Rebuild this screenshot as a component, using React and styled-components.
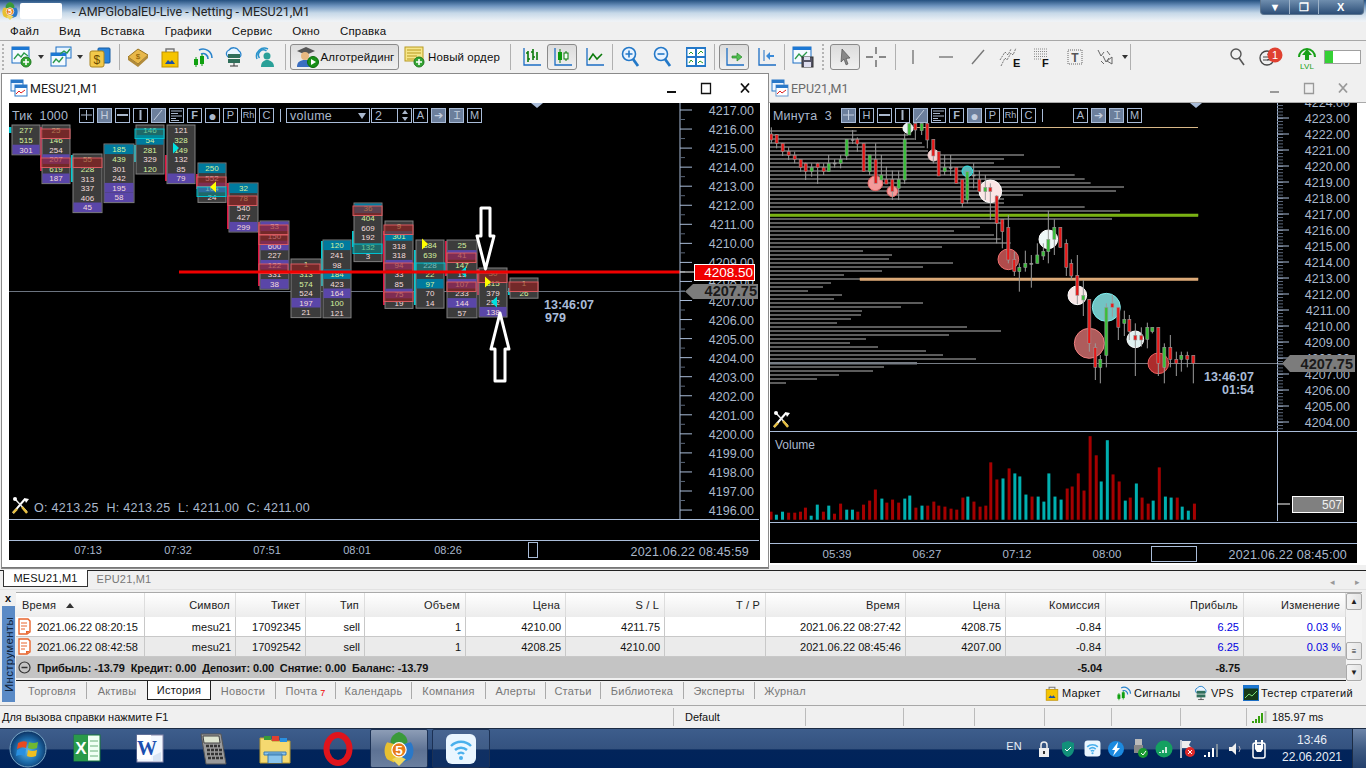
import React from "react";
import styled, { createGlobalStyle } from "styled-components";

const GlobalStyle = createGlobalStyle`
  html, body { margin: 0; padding: 0; background: #f0f0f0; }
  body { font-family: "Liberation Sans", Arial, sans-serif; }
  * { box-sizing: border-box; }
`;

const Screen = styled.div`
  width: 1366px;
  height: 768px;
  overflow: hidden;
  display: flex;
  flex-direction: column;
  background: #f0f0f0;
  color: #111;
`;

/* ---------- top of the window ---------- */
const TitleBar = styled.div`
  height: 22px;
  display: flex;
  align-items: center;
  padding-left: 1px;
  background: linear-gradient(180deg, #24507f 0, #6f95bf 6px, #c6d8e8 13px, #eef2f6 21px);
`;
const Redacted = styled.div`
  width: 42px;
  height: 16px;
  margin: 0 10px 0 1px;
  background: #fff;
  border-radius: 2px;
`;
const TitleText = styled.div`
  font-family: Roboto, sans-serif;
  font-size: 12.5px;
  color: #222;
`;
const CaptionButtons = styled.div`
  margin-left: auto;
  margin-right: 2px;
  margin-top: -7px;
  width: 104px;
  height: 15px;
  display: flex;
  border: 1px solid #5c7590;
  border-top: 0;
  border-radius: 0 0 4px 4px;
  background: linear-gradient(180deg, #6f8eae, #2d4f78);
`;
const CaptionButton = styled.div`
  flex: ${(p) => p.$grow || 1};
  display: flex;
  align-items: center;
  justify-content: center;
  color: #fff;
  font-size: 11px;
  font-weight: bold;
  border-right: 1px solid #9db2c8;
  &:last-child { border-right: 0; }
`;
const MenuBar = styled.div`
  height: 19px;
  display: flex;
  align-items: center;
  gap: 20px;
  padding-left: 10px;
  font-size: 11.5px;
  letter-spacing: 0.2px;
  background: #f0f0f0;
  border-bottom: 1px solid #a8a8a8;
`;
const Toolbar = styled.div`
  height: 32px;
  display: flex;
  align-items: center;
  background: #f0f0f0;
`;
const Grip = styled.div`
  width: ${(p) => p.$w || 4}px;
  height: 26px;
  border-left: 2px dotted #b4b4b4;
  margin-left: ${(p) => p.$ml || 0}px;
`;
const Gap = styled.div`
  width: ${(p) => p.$w}px;
  flex-shrink: 0;
`;
const Fill = styled.div`
  flex: 1;
`;
const Sep = styled.div`
  width: 1px;
  height: 26px;
  flex-shrink: 0;
  background: #b0b0b0;
`;
const ToolBtn = styled.div`
  width: ${(p) => p.$w}px;
  height: 26px;
  flex-shrink: 0;
  display: flex;
  align-items: center;
  justify-content: center;
  gap: 2px;
  font-size: 11.5px;
  letter-spacing: 0.1px;
  white-space: nowrap;
  border-radius: 3px;
  border: 1px solid ${(p) => (p.$pressed ? "#8a8a8a" : "transparent")};
  background: ${(p) => (p.$pressed ? "linear-gradient(180deg,#dcdcdc,#f0f0f0)" : "transparent")};
`;
const DropArrow = styled.div`
  width: ${(p) => p.$w}px;
  flex-shrink: 0;
  display: flex;
  justify-content: center;
  &::after {
    content: "";
    border: 3.5px solid transparent;
    border-top: 4px solid #333;
    border-bottom: 0;
  }
`;
const LevelBar = styled.div`
  width: 37px;
  height: 14px;
  flex-shrink: 0;
  border: 1px solid #a0a0a0;
  background: linear-gradient(90deg, #35d035 0 24%, #fff 24%);
`;

/* ---------- chart windows ---------- */
const Workspace = styled.div`
  height: 497px;
  display: flex;
  padding-top: 1px;
  align-items: flex-start;
`;
const ChartWindow = styled.div`
  display: flex;
  flex-direction: column;
  background: #fff;
  width: ${(p) => p.$w}px;
  margin-left: ${(p) => p.$ml}px;
  height: ${(p) => p.$h}px;
  padding-right: ${(p) => p.$pr}px;
  padding-left: ${(p) => p.$pl}px;
  border-bottom: ${(p) => (p.$active ? "1px solid #777" : "0")};
  outline: ${(p) => (p.$active ? "1px solid #8a8a8a" : "0")};
`;
const WindowHead = styled.div`
  height: 29px;
  flex-shrink: 0;
  display: flex;
  align-items: center;
  gap: 2px;
  margin-right: ${(p) => -p.$pr}px;
  margin-left: ${(p) => -p.$pl}px;
  padding-left: ${(p) => p.$textPad}px;
  font-size: 12.5px;
  font-family: Roboto, sans-serif;
  color: ${(p) => (p.$active ? "#1a1a1a" : "#6a6a6a")};
  background: ${(p) => (p.$active ? "#fff" : "#f0f0f0")};
  border-bottom: 1px solid ${(p) => (p.$active ? "#fff" : "#aaa")};
`;
const HeadButtons = styled.div`
  margin-left: auto;
  padding-right: 6px;
  display: flex;
  align-items: center;
  color: ${(p) => (p.$active ? "#111" : "#999")};
  & > div:last-child { margin-left: ${(p) => (p.$active ? "5px" : "0")}; }
`;
const HeadButton = styled.div`
  width: 34px;
  display: flex;
  justify-content: center;
`;
const ChartFrame = styled.div`
  position: relative;
  background: #000;
  width: ${(p) => p.$w}px;
  height: ${(p) => p.$h}px;
  overflow: hidden;
  & > svg { display: block; }
`;
const ChartTools = styled.div`
  position: absolute;
  top: 5px;
  left: 3px;
  display: flex;
  align-items: center;
  gap: 3px;
  height: 15px;
  color: #aab8cc;
  font-size: 12.5px;
`;
const ChartLabel = styled.div`
  width: ${(p) => p.$w}px;
  white-space: pre;
  letter-spacing: 0.2px;
  flex-shrink: 0;
`;
const ChartBtn = styled.div`
  width: 15px;
  height: 15px;
  flex-shrink: 0;
  display: flex;
  align-items: center;
  justify-content: center;
  border: 1px solid #a9bcd8;
  font-size: ${(p) => p.$size || 11}px;
  line-height: 1;
  color: ${(p) => (p.$on ? "#c4cfdf" : "#aab8cc")};
  background: ${(p) => (p.$on ? "#6c7f9c" : "#000")};
`;
const ChartDivider = styled.div`
  width: ${(p) => p.$w}px;
  height: 13px;
  flex-shrink: 0;
  border-left: 1px solid #a9bcd8;
  margin-left: 3px;
`;
const VolumeSelect = styled.div`
  width: 84px;
  height: 15px;
  flex-shrink: 0;
  margin-left: -1px;
  display: flex;
  align-items: center;
  justify-content: space-between;
  padding: 0 3px;
  border: 1px solid #a9bcd8;
  font-size: 12.5px;
  letter-spacing: 0.3px;
  &::after {
    content: "";
    border: 4px solid transparent;
    border-top: 6px solid #aab8cc;
    border-bottom: 0;
  }
`;
const Spinner = styled.div`
  width: 41px;
  height: 15px;
  flex-shrink: 0;
  margin-left: -2px;
  margin-right: -2px;
  display: flex;
  align-items: center;
  justify-content: space-between;
  padding-left: 3px;
  border: 1px solid #a9bcd8;
`;
const SpinArrows = styled.div`
  width: 14px;
  height: 13px;
  display: flex;
  flex-direction: column;
  align-items: center;
  justify-content: space-around;
  border-left: 1px solid #a9bcd8;
  &::before, &::after {
    content: "";
    border: 3px solid transparent;
  }
  &::before { border-bottom: 4px solid #aab8cc; border-top: 0; }
  &::after { border-top: 4px solid #aab8cc; border-bottom: 0; }
`;

/* ---------- symbol tabs ---------- */
const SymbolTabs = styled.div`
  height: 20px;
  flex-shrink: 0;
  display: flex;
  align-items: flex-end;
  padding: 0 0 2px 3px;
  font-size: 11px;
  letter-spacing: 0.2px;
  border-top: 1px solid #222;
  background: #f0f0f0;
  border-bottom: 1px solid #e2e2e2;
`;
const SymbolTab = styled.div`
  width: ${(p) => p.$w}px;
  height: 17px;
  display: flex;
  align-items: center;
  justify-content: center;
  color: ${(p) => (p.$active ? "#111" : "#777")};
  background: ${(p) => (p.$active ? "#fff" : "transparent")};
  border: ${(p) => (p.$active ? "1px solid #333" : "0")};
  border-top: 0;
`;
const TabArrows = styled.div`
  margin-left: auto;
  width: 36px;
  display: flex;
  justify-content: space-between;
  padding-right: 6px;
  color: #999;
  font-size: 9px;
`;

/* ---------- terminal ---------- */
const Terminal = styled.div`
  height: 116px;
  flex-shrink: 0;
  display: flex;
  padding-top: 2px;
  border-bottom: 1px solid #a8a8a8;
`;
const SideStrip = styled.div`
  width: 16px;
  flex-shrink: 0;
  display: flex;
  flex-direction: column;
  align-items: center;
  font-size: 11px;
`;
const CloseMark = styled.div`
  height: 14px;
  font-weight: bold;
  font-size: 11px;
  line-height: 12px;
`;
const SideLabel = styled.div`
  width: 13px;
  height: 96px;
  display: flex;
  align-items: center;
  justify-content: center;
  background: #5a8ac6;
  color: #10243c;
  writing-mode: vertical-rl;
  transform: rotate(180deg);
  letter-spacing: 0.3px;
  font-size: 11.5px;
`;
const TerminalBody = styled.div`
  width: 1330px;
  flex-shrink: 0;
  display: flex;
  flex-direction: column;
`;
const TableGrid = styled.div`
  display: grid;
  grid-template-columns: 129px 91px 70px 59px 101px 100px 99px 101px 140px 100px 100px 138px 102px;
  height: 85px;
  grid-template-rows: 24px 20px 20px 21px;
  border-top: 1px solid #aaa;
  border-bottom: 0;
  background: #fff;
  font-size: 11px;
`;
const HeadCell = styled.div`
  display: flex;
  align-items: center;
  justify-content: ${(p) => (p.$left ? "flex-start" : "flex-end")};
  gap: 10px;
  padding: 0 5px 0 6px;
  color: #222;
  letter-spacing: 0.2px;
  background: linear-gradient(180deg, #fff, #ececec);
  border-right: 1px solid #ddd;
`;
const SortMark = styled.span`
  border: 4px solid transparent;
  border-bottom: 5px solid #333;
  border-top: 0;
`;
const Cell = styled.div`
  display: flex;
  align-items: center;
  justify-content: ${(p) => (p.$left ? "flex-start" : "flex-end")};
  gap: 6px;
  padding: 0 4px 0 2px;
  color: ${(p) => (p.$blue ? "#0000e0" : "#111")};
  background: ${(p) => (p.$alt ? "#ebebeb" : "#fff")};
  border-right: 1px solid #c8c8c8;
  border-bottom: 1px solid #c8c8c8;
`;
const SumCell = styled.div`
  grid-column: span ${(p) => p.$span || 1};
  display: flex;
  align-items: center;
  justify-content: ${(p) => (p.$left ? "flex-start" : "flex-end")};
  gap: 6px;
  white-space: pre;
  padding: 0 4px 0 2px;
  font-weight: bold;
  letter-spacing: -0.1px;
  background: #c4c4c4;
`;
const BottomTabs = styled.div`
  margin-top: 3px;
  margin-right: -16px;
  height: 22px;
  display: flex;
  padding-left: 2px;
  border-top: 1px solid #222;
  font-size: 11px;
  letter-spacing: 0.25px;
`;
const BottomTab = styled.div`
  width: ${(p) => p.$w}px;
  flex-shrink: 0;
  height: ${(p) => (p.$active ? "19px" : "17px")};
  margin-top: ${(p) => (p.$active ? "0" : "1px")};
  display: flex;
  align-items: center;
  justify-content: center;
  color: ${(p) => (p.$active ? "#111" : "#777")};
  background: ${(p) => (p.$active ? "#fff" : "transparent")};
  border: ${(p) => (p.$active ? "1px solid #222" : "0")};
  border-top: 0;
  border-right: ${(p) => (p.$active ? "1px solid #222" : p.$noSep ? "0" : "1px solid #aaa")};
`;
const MailCount = styled.span`
  color: #e00;
  font-size: 9px;
  margin: 4px 0 0 3px;
`;
const ServiceLink = styled.div`
  width: ${(p) => p.$w}px;
  flex-shrink: 0;
  display: flex;
  align-items: center;
  gap: 2px;
  color: #111;
  height: 20px;
  margin-top: 2px;
`;
const ScrollBar = styled.div`
  width: 16px;
  height: 90px;
  flex-shrink: 0;
  display: flex;
  flex-direction: column;
  background: #f4f4f4;
  border-top: 1px solid #aaa;
`;
const ScrollBtn = styled.div`
  height: ${(p) => p.$h}px;
  margin-top: ${(p) => p.$mt || 0}px;
  display: flex;
  align-items: center;
  justify-content: center;
  background: linear-gradient(90deg, #f4f4f4, #e4e4e4);
  border: 1px solid #aaa;
  border-radius: 2px;
  font-size: 8px;
  color: #222;
`;

/* ---------- status + taskbar ---------- */
const StatusBar = styled.div`
  height: 22px;
  flex-shrink: 0;
  display: flex;
  align-items: center;
  font-size: 11px;
  background: #f0f0f0;
`;
const StatusCell = styled.div`
  width: ${(p) => p.$w}px;
  height: 18px;
  flex-shrink: 0;
  display: flex;
  align-items: center;
  gap: 4px;
  padding-left: ${(p) => p.$pl || 0}px;
  border-right: ${(p) => (p.$last ? "0" : "1px solid #bbb")};
`;
const Taskbar = styled.div`
  height: 40px;
  flex-shrink: 0;
  display: flex;
  align-items: center;
  border-top: 1px solid #1c2c44;
  color: #e8eef6;
  background: linear-gradient(180deg, #3d5d8c 0, #34527f 52%, #02245a 53%, #00235a 100%);
`;
const TaskItem = styled.div`
  width: ${(p) => p.$w}px;
  height: 39px;
  flex-shrink: 0;
  display: flex;
  align-items: center;
  justify-content: center;
  border: ${(p) => (p.$frame ? "1px solid #1c3154" : "0")};
  border-radius: 2px;
  background: ${(p) =>
    p.$active
      ? "linear-gradient(180deg,#8d9db6,#5d7294 55%,#6a7f9f)"
      : p.$frame
      ? "rgba(255,255,255,.06)"
      : "transparent"};
`;
const TrayLang = styled.div`
  width: 36px;
  text-align: center;
  font-size: 11px;
  margin-top: -6px;
`;
const TrayIcon = styled.div`
  width: 24px;
  display: flex;
  justify-content: center;
`;
const Clock = styled.div`
  width: 80px;
  text-align: center;
  font-size: 12px;
  line-height: 17px;
`;
const ShowDesktop = styled.div`
  width: 14px;
  height: 39px;
  background: linear-gradient(180deg, #6c84a8, #3c5880 55%, #24406c);
  border-left: 1px solid #1c2c44;
`;

/* ---------- icons ---------- */
const Ico = ({ s = 20, w, h, children }) => (
  <svg width={w || s} height={h || s} viewBox={`0 0 ${w || s} ${h || s}`}>
    {children}
  </svg>
);
const Plus = ({ x, y, r = 5 }) => (
  <g>
    <circle cx={x} cy={y} r={r} fill="#35a535" stroke="#1f7a1f" />
    <path d={`M${x - r + 2} ${y}h${2 * r - 4}M${x} ${y - r + 2}v${2 * r - 4}`} stroke="#fff" strokeWidth="1.6" />
  </g>
);
const NewChartIcon = () => (
  <Ico s={22}>
    <rect x="1" y="1" width="17" height="16" fill="#f4faff" stroke="#1c6ec4" />
    <rect x="1" y="1" width="17" height="3" fill="#1c78d4" />
    <path d="M3 13l4-5 3 3 3-4 4 3" fill="none" stroke="#2a9a4a" strokeWidth="1.3" />
    <Plus x={15} y={16} />
  </Ico>
);
const ProfilesIcon = () => (
  <Ico s={22}>
    <rect x="6" y="1" width="15" height="11" fill="#e8f5ff" stroke="#1c6ec4" />
    <rect x="1" y="7" width="15" height="13" fill="#f4faff" stroke="#1c6ec4" />
    <rect x="1" y="7" width="15" height="3" fill="#1c78d4" />
    <path d="M3 17l3-4 3 3 4-5M10 8l4-3 3 2 3-4" fill="none" stroke="#2a9a4a" strokeWidth="1.4" />
  </Ico>
);
const MoneyIcon = () => (
  <Ico s={22}>
    <rect x="9" y="2" width="12" height="15" rx="1" fill="#2a84dc" stroke="#145aa0" />
    <rect x="1" y="5" width="14" height="16" rx="2" fill="#f2c94a" stroke="#a88420" />
    <text x="8" y="18" fontSize="12" textAnchor="middle" fill="#6b4a00" fontFamily="Liberation Sans">$</text>
  </Ico>
);
const BookIcon = () => (
  <Ico s={22}>
    <path d="M1 11L11 3l10 6-10 9z" fill="#e8b84a" stroke="#9a7420" />
    <path d="M1 11l10 7 10-9v3l-10 9-10-7z" fill="#b08a3a" />
    <text x="11" y="13" fontSize="8" textAnchor="middle" fill="#8a5a00" fontFamily="Liberation Sans">$</text>
  </Ico>
);
const BagIcon = ({ s = 22 }) => (
  <svg width={s} height={s} viewBox="0 0 22 22">
    <rect x="3" y="6" width="16" height="15" fill="#f5c400" stroke="#c09000" />
    <path d="M7 6V3h8v3" fill="none" stroke="#777" strokeWidth="1.4" />
    <path d="M6 18l3-4 2 2 2-2 3 4z" fill="#1a50a8" />
  </svg>
);
const SignalIcon = ({ s = 22 }) => (
  <svg width={s} height={s} viewBox="0 0 22 22">
    <path d="M7 4a9 9 0 0 1 13 8M9 8a5 5 0 0 1 7 5" fill="none" stroke="#2a84cc" strokeWidth="1.6" />
    <rect x="2" y="13" width="4" height="6" fill="#10a010" />
    <rect x="8" y="10" width="4" height="8" fill="#10a010" />
    <path d="M4 11v10M10 8v12" stroke="#10a010" />
  </svg>
);
const VpsIcon = ({ s = 22 }) => (
  <svg width={s} height={s} viewBox="0 0 22 22">
    <path d="M5 11a4 4 0 0 1 1-7 6 6 0 0 1 10 1 4 4 0 0 1 1 6" fill="#eaf5ff" stroke="#2a84cc" strokeWidth="1.3" />
    <rect x="5" y="8" width="12" height="4" fill="#2f6e5a" />
    <rect x="5" y="13" width="12" height="4" fill="#2f6e5a" />
    <path d="M11 17v3M7 20h8" stroke="#333" />
  </svg>
);
const PersonIcon = () => (
  <Ico s={22}>
    <path d="M3 13a8 8 0 0 1 11-10M5.5 12a5 5 0 0 1 7-7" fill="none" stroke="#2a94cc" strokeWidth="1.5" />
    <circle cx="13" cy="10" r="3.5" fill="#2aa098" />
    <path d="M7 21c0-5 3-7 6-7s7 2 7 7z" fill="#2aa098" />
  </Ico>
);
const AlgoIcon = () => (
  <Ico s={24}>
    <path d="M2 6l9-4 9 4-9 4z" fill="#555" />
    <circle cx="10" cy="11" r="4" fill="#e8b880" />
    <path d="M2 22c0-5 3-7 8-7s7 2 7 7z" fill="#3a6ec0" />
    <circle cx="18" cy="17" r="5.5" fill="#189018" stroke="#0c6a0c" />
    <path d="M16 14l5 3-5 3z" fill="#fff" />
  </Ico>
);
const OrderIcon = () => (
  <Ico s={22}>
    <rect x="1" y="1" width="18" height="14" fill="#f6e68a" stroke="#b89a20" />
    <path d="M3 4h14M3 7h14M3 10h10M3 13h8" stroke="#b89a20" />
    <Plus x={15} y={16} />
  </Ico>
);
const Axes = () => <path d="M3 1v17h17" fill="none" stroke="#1c6ec4" strokeWidth="1.3" />;
const BarsIcon = () => (
  <Ico>
    <Axes />
    <path d="M7 4v11M5 6h2M7 12h2M12 2v11M10 5h2M12 10h2M16 5v8" stroke="#0a7a0a" strokeWidth="1.6" fill="none" />
  </Ico>
);
const CandlesIcon = () => (
  <Ico>
    <Axes />
    <path d="M8 2v14M14 4v10" stroke="#0a7a0a" />
    <rect x="6" y="5" width="4" height="8" fill="#0a9a0a" />
    <rect x="12" y="6" width="4" height="6" fill="#f4fff4" stroke="#0a7a0a" />
  </Ico>
);
const LineIcon = () => (
  <Ico>
    <Axes />
    <path d="M5 13l4-6 4 5 5-5" fill="none" stroke="#0a7a0a" strokeWidth="1.6" />
  </Ico>
);
const ZoomIcon = ({ plus }) => (
  <Ico s={22}>
    <circle cx="9" cy="8" r="6.5" fill="#e8f3ff" stroke="#2378c8" strokeWidth="1.6" />
    <path d="M13 13l5 7" stroke="#2378c8" strokeWidth="2.8" />
    <path d={plus ? "M5.5 8h7M9 4.5v7" : "M5.5 8h7"} stroke="#2378c8" strokeWidth="1.6" />
  </Ico>
);
const TileIcon = () => (
  <Ico s={22}>
    <rect x="1" y="1" width="20" height="20" fill="#2378c8" />
    <rect x="2.5" y="3" width="7.5" height="7" fill="#fff" />
    <rect x="12" y="3" width="7.5" height="7" fill="#fff" />
    <rect x="2.5" y="12" width="7.5" height="7" fill="#fff" />
    <rect x="12" y="12" width="7.5" height="7" fill="#fff" />
    <path d="M4 8l2-2 2 2M13 8l3-3 2 2M4 17l2-3 2 2M13 17l2-2 3 2" stroke="#2a9a2a" fill="none" />
  </Ico>
);
const AutoScrollIcon = () => (
  <Ico>
    <Axes />
    <path d="M8 9h5V6l5 4-5 4v-3H8z" fill="#52c052" stroke="#2a8a2a" strokeWidth=".7" />
  </Ico>
);
const ShiftIcon = () => (
  <Ico>
    <Axes />
    <path d="M8 3v11" stroke="#1c6ec4" />
    <path d="M18 8h-4V5l-4 4 4 4v-3h4z" fill="#3a8ad8" />
  </Ico>
);
const SaveIcon = () => (
  <Ico s={22}>
    <rect x="1" y="1" width="18" height="16" fill="#f4faff" stroke="#1c6ec4" />
    <rect x="1" y="1" width="18" height="3" fill="#1c78d4" />
    <path d="M3 13l4-5 3 3 5-5" stroke="#2a9a4a" fill="none" strokeWidth="1.3" />
    <rect x="10" y="11" width="11" height="10" fill="#556" stroke="#333" />
    <rect x="12" y="16" width="7" height="5" fill="#dde" />
    <rect x="12" y="11" width="6" height="3" fill="#dde" />
  </Ico>
);
const CursorIcon = () => (
  <Ico s={18}>
    <path d="M6 1l8 9-4 .5L12 16l-2 .8-2-5.6L5 14z" fill="#888" stroke="#444" strokeWidth=".6" />
  </Ico>
);
const CrossIcon = () => (
  <Ico s={22}>
    <path d="M11 1v7M11 14v7M1 11h7M14 11h7" stroke="#666" strokeWidth="1.4" />
  </Ico>
);
const ToolLine = ({ d }) => (
  <Ico s={20}>
    <path d={d} stroke="#777" strokeWidth="1.4" fill="none" />
  </Ico>
);
const EIcon = () => (
  <Ico s={24}>
    <path d="M3 21l4-8 2 2 4-7 2 2 3-7M2 15l5-8 3 3 3-6" stroke="#777" fill="none" strokeDasharray="2 1" />
    <text x="15" y="22" fontSize="11" fontWeight="bold" fill="#111" fontFamily="Liberation Sans">E</text>
  </Ico>
);
const FIcon = () => (
  <Ico s={22}>
    <path d="M2 3h13M2 5.5h13M2 8h13M2 10.500h13M2 13h7" stroke="#888" strokeDasharray="1 1" />
    <text x="10" y="21" fontSize="11" fontWeight="bold" fill="#111" fontFamily="Liberation Sans">F</text>
  </Ico>
);
const TIcon = () => (
  <Ico s={20}>
    <rect x="3" y="3" width="14" height="14" fill="none" stroke="#666" strokeDasharray="1 1" />
    <text x="10" y="15" fontSize="12" fontWeight="bold" textAnchor="middle" fill="#555" fontFamily="Liberation Sans">T</text>
  </Ico>
);
const ArrowsIcon = () => (
  <Ico s={20}>
    <path d="M3 3l3 6 3-4M8 9l3 6 3-4M12 4l3 4M6 14l3 3" stroke="#666" fill="none" />
    <path d="M12 14l5-4v7z" fill="none" stroke="#666" />
  </Ico>
);
const SearchIcon = () => (
  <Ico s={20}>
    <circle cx="8" cy="7" r="5" fill="none" stroke="#555" strokeWidth="1.4" />
    <path d="M11 11l5 7" stroke="#555" strokeWidth="1.6" />
  </Ico>
);
const NotifyIcon = () => (
  <Ico w={28} h={22}>
    <circle cx="9" cy="12" r="7" fill="none" stroke="#444" strokeWidth="1.3" />
    <path d="M5 11h7M5 14h7M9 8a2 2 0 0 1 0 6" stroke="#444" fill="none" />
    <circle cx="17" cy="9" r="7.500" fill="#e04030" />
    <text x="17" y="13" fontSize="11" textAnchor="middle" fill="#fff" fontFamily="Liberation Sans">1</text>
  </Ico>
);
const LvlIcon = () => (
  <Ico w={24} h={26}>
    <path d="M4 13a8 8 0 1 1 16 0" fill="none" stroke="#18a018" strokeWidth="2" />
    <path d="M12 5l5 6h-3v5h-4v-5H7z" fill="#18a018" />
    <text x="12" y="25" fontSize="8" textAnchor="middle" fill="#18a018" fontFamily="Liberation Sans">LVL</text>
  </Ico>
);
const WindowIcon = ({ dim }) => (
  <Ico s={18}>
    <rect x="1" y="1" width="12" height="11" fill="#eef6ff" stroke="#2a78c8" />
    <rect x="1" y="1" width="12" height="3" fill="#2a78c8" />
    <rect x="5" y="6" width="12" height="11" fill="#fff" stroke={dim ? "#6a9ad0" : "#2a78c8"} />
    <rect x="5" y="6" width="12" height="3" fill="#2a78c8" />
    <path d="M6 15l3-3 2 2 4-3" stroke="#e02020" fill="none" />
  </Ico>
);
const Mt5Logo = ({ s = 18 }) => (
  <svg width={s} height={s} viewBox="0 0 20 20">
    <path d="M10 0c3 1 5 3 5 6l-5 4-5-4c0-3 2-5 5-6z" fill="#3a9a3a" />
    <path d="M3 6c-2 3-2 7 0 10l4 2 3-5-3-6z" fill="#e8c030" />
    <path d="M17 6c2 3 2 7 0 10l-5 2-2-5 3-6z" fill="#2a78c8" />
    <path d="M6 16l4 4 4-4-4-2z" fill="#f0d860" />
    <circle cx="10" cy="10.500" r="4.200" fill="#e87a18" stroke="#fff" strokeWidth=".7" />
    <text x="10" y="13.500" fontSize="8" fontWeight="bold" textAnchor="middle" fill="#fff" fontFamily="Liberation Sans">5</text>
  </svg>
);
const OrbIcon = () => (
  <svg width="38" height="38" viewBox="0 0 38 38">
    <defs>
      <radialGradient id="orb" cx="50%" cy="55%" r="55%">
        <stop offset="0" stopColor="#60b8e8" />
        <stop offset="0.6" stopColor="#1c6aa8" />
        <stop offset="1" stopColor="#0c3060" />
      </radialGradient>
    </defs>
    <circle cx="19" cy="19" r="18" fill="url(#orb)" stroke="#7aa8c8" />
    <path d="M9 13q5-3 9-1l-1 6q-4-2-9 1z" fill="#e84a20" />
    <path d="M20 12q4 2 9 0l-1 6q-5 2-9 0z" fill="#70b830" />
    <path d="M8 20q5-3 9-1l-1 7q-4-2-9 0z" fill="#2a90e0" />
    <path d="M19 20q4 2 9 0l-1 6q-5 2-9 0z" fill="#f0c020" />
  </svg>
);
const ExcelIcon = () => (
  <Ico w={30} h={30}>
    <rect x="2" y="1" width="26" height="26" fill="#f0fff4" stroke="#1a7a3a" />
    <rect x="2" y="1" width="14" height="26" fill="#2a9a4a" />
    <text x="9" y="20" fontSize="17" fontWeight="bold" textAnchor="middle" fill="#fff" fontFamily="Liberation Sans">X</text>
    <path d="M18 7h8M18 12h8M18 17h8M18 22h8" stroke="#6ab07a" />
  </Ico>
);
const WordIcon = () => (
  <Ico w={30} h={30}>
    <rect x="2" y="1" width="26" height="27" fill="#f4f8ff" stroke="#88a" />
    <rect x="2" y="1" width="14" height="24" fill="#fff" />
    <text x="12" y="21" fontSize="20" fontWeight="bold" textAnchor="middle" fill="#1c50b0" fontFamily="Liberation Serif">W</text>
    <path d="M18 22l8-4v9h-8z" fill="#d8e4f4" />
  </Ico>
);
const CalcIcon = () => (
  <Ico w={30} h={32}>
    <path d="M3 1h20l5 30H8z" fill="#9a9a9a" stroke="#555" />
    <path d="M5 3h16l1 7H6z" fill="#dde4d0" stroke="#444" />
    <path d="M8 13h14M9 17h15M9 21h15M10 25h15" stroke="#333" strokeWidth="2.500" strokeDasharray="3 1" />
  </Ico>
);
const FolderIcon = () => (
  <Ico w={32} h={30}>
    <path d="M1 4h10l2 3h18v22H1z" fill="#f5d970" stroke="#b89a30" />
    <rect x="5" y="2" width="7" height="4" fill="#3a9a3a" />
    <rect x="13" y="2" width="7" height="5" fill="#e04030" />
    <rect x="21" y="4" width="7" height="4" fill="#2a90e0" />
    <path d="M9 29V20h14v9M5 18h22v3H5z" fill="#8ac4ec" stroke="#3a7ab0" />
  </Ico>
);
const OperaIcon = () => (
  <Ico w={30} h={34}>
    <ellipse cx="15" cy="17" rx="11.500" ry="14" fill="none" stroke="#e0141c" strokeWidth="6" />
  </Ico>
);
const WifiTile = ({ s = 32, small }) => (
  <svg width={s} height={s} viewBox="0 0 32 32">
    <rect x="1" y="1" width="30" height="30" rx="6" fill="#eaf6ff" />
    <path d="M6 13a14 14 0 0 1 20 0M10 17a9 9 0 0 1 12 0M13 21a4 4 0 0 1 6 0" fill="none" stroke="#4ab0ec" strokeWidth={small ? 3 : 2.4} />
    <circle cx="16" cy="25" r="2" fill="#4ab0ec" />
  </svg>
);
const Tray = {
  lock: (
    <Ico w={14} h={18}>
      <path d="M4 8V5a3 3 0 0 1 6 0v3" fill="none" stroke="#eee" strokeWidth="1.500" />
      <rect x="2" y="8" width="10" height="9" fill="#eee" />
      <rect x="6" y="11" width="2" height="3" fill="#333" />
    </Ico>
  ),
  shield: (
    <Ico w={14} h={18}>
      <path d="M7 1l6 2v6c0 4-3 7-6 8-3-1-6-4-6-8V3z" fill="#12907a" />
      <path d="M4 9l2 2 4-4" stroke="#fff" fill="none" />
    </Ico>
  ),
  wifi: <WifiTile s={17} small />,
  bolt: (
    <Ico s={18}>
      <circle cx="9" cy="9" r="8" fill="#1c8ae0" />
      <path d="M11 2L5 10h3l-2 6 7-8h-3z" fill="#fff" />
    </Ico>
  ),
  usb: (
    <Ico s={20}>
      <rect x="5" y="0" width="7" height="6" fill="#bbb" />
      <rect x="4" y="6" width="9" height="8" fill="#888" />
      <circle cx="13" cy="14" r="5" fill="#189a30" />
      <path d="M11 14l2 2 3-4" stroke="#fff" fill="none" />
    </Ico>
  ),
  bars: (
    <Ico s={18}>
      <circle cx="9" cy="9" r="8.500" fill="#14a060" />
      <path d="M5 12v1M8 10v3M11 7v6" stroke="#fff" strokeWidth="1.600" />
    </Ico>
  ),
  flag: (
    <Ico s={20}>
      <path d="M3 1v18" stroke="#eee" strokeWidth="1.500" />
      <path d="M4 2h9l-2 4 3 3H4z" fill="#eee" />
      <circle cx="12" cy="13" r="5" fill="#e02a2a" />
      <path d="M10 11l4 4M14 11l-4 4" stroke="#fff" />
    </Ico>
  ),
  signal: (
    <Ico s={18}>
      <path d="M2 15v2M6 12v5M10 8v9" stroke="#fff" strokeWidth="2" />
      <path d="M14 4v13" stroke="#7a8a9a" strokeWidth="2" />
    </Ico>
  ),
  speaker: (
    <Ico s={18}>
      <path d="M2 7h3l4-4v12l-4-4H2z" fill="#eee" />
      <path d="M12 6a5 5 0 0 1 0 6" stroke="#aab" fill="none" />
    </Ico>
  ),
  plug: (
    <Ico s={20}>
      <rect x="3" y="4" width="12" height="15" rx="2" fill="none" stroke="#fff" strokeWidth="1.500" />
      <path d="M6 1v5M12 1v5" stroke="#fff" strokeWidth="2" />
      <path d="M5 6h8v4l-2 3H7l-2-3z" fill="#fff" />
    </Ico>
  ),
};
const ToolsMark = ({ x, y }) => (
  <g transform={`translate(${x} ${y})`}>
    <path d="M1 16L13 2" stroke="#fff" strokeWidth="2" />
    <path d="M12 1l5 1-3 4z" fill="#fff" />
    <path d="M3 2l12 13" stroke="#eee" strokeWidth="1.500" />
    <path d="M10 10l5 6" stroke="#e8c040" strokeWidth="2.400" />
    <path d="M1 16l4-4" stroke="#e8c040" strokeWidth="2.400" />
    <circle cx="3" cy="2" r="2" fill="#fff" />
  </g>
);
const TableDoc = () => (
  <Ico w={13} h={17}>
    <path d="M1 1h9l2 2v11l-3 2H1z" fill="#fff" stroke="#e8642c" strokeWidth="1.400" />
    <path d="M3 5h6M3 8h6M3 11h4" stroke="#e8642c" />
    <path d="M8 16l4-3h-4z" fill="#e8642c" />
  </Ico>
);

/* ---------- data ---------- */
const AXIS = "#a9bcd8";
const TXT = "#aab8cc";
const range = (n) => Array.from({ length: n }, (_, i) => i);

// rows: value + g(reen)/p(ink) text + u(purple)/b(lue) row
const footprint = [
  { x: 13, top: 125, rows: "277g 515g 301pu" },
  { x: 43, top: 125, rows: "25g 146g 254p 207pu 619g 187pu" },
  { x: 74, top: 154, w: 29, rows: "55g 228g 313p 337p 406p 45pu" },
  { x: 105, top: 144, w: 30, rows: "185gb 439g 301p 242p 195pu 58pu" },
  { x: 137, top: 125, rows: "146g 54gb 281g 329p 120g" },
  { x: 168, top: 125, rows: "121p 328g 149g 132p 85p 79pu" },
  { x: 199, top: 163, rows: "250gb 552p 104pu 24p" },
  { x: 230, top: 183, w: 29, rows: "32gb 78g 540p 427p 299pu" },
  { x: 261, top: 221, w: 29, rows: "33pu 150p 600pu 227p 122pu 331p 38pu" },
  { x: 292, top: 259, w: 30, rows: "1g 313g 574g 524p 197pu 21p" },
  { x: 324, top: 240, rows: "120gb 241p 98p 184gb 423p 164pu 100g 121p" },
  { x: 355, top: 203, rows: "36gb 404g 609p 192p 132g 3p" },
  { x: 386, top: 221, rows: "9g 301gb 318p 318p 94pu 33p 85p 75pu 19p" },
  { x: 417, top: 240, rows: "384g 639g 228p 22g 97gb 70p 14p" },
  { x: 448, top: 240, w: 30, rows: "25g 41pu 147g 13p 107pu 233p 144pu 57p" },
  { x: 480, top: 268, rows: "30g 315g 379p 232p 138pu" },
  { x: 511, top: 278, rows: "1g 26g" },
];
const redBoxes = [
  [42, 129], [42, 158], [74, 158], [198, 177], [229, 196], [260, 225], [260, 235], [260, 264], [292, 264],
  [354, 206], [385, 225], [385, 263], [385, 292], [448, 253], [448, 282], [479, 273], [510, 282],
];
const tealBoxes = [[136, 129], [198, 187], [354, 244], [417, 263]];
const sideBars = [
  [10, 127, 133, 0], [41, 127, 171, 1], [72, 155, 182, 0], [135, 145, 162, 0], [166, 155, 181, 1],
  [197, 174, 189, 1], [228, 183, 229, 1], [259, 222, 286, 1], [322, 241, 286, 0], [353, 231, 247, 0],
  [384, 231, 305, 1], [415, 250, 305, 0], [446, 241, 276, 1], [478, 269, 295, 1], [509, 288, 295, 0],
];
// x, y, direction (1 right, -1 left), colour
const flags = [
  [174, 148, 1, "#00e0e0"], [217, 187, -1, "#ffff00"], [423, 244, 1, "#ffff00"],
  [467, 272, -1, "#00e0e0"], [486, 282, 1, "#ffff00"], [498, 302, -1, "#00e0e0"],
];

// end of each profile row, in 3x units measured from x = 768
const profile = [
  266, 420, 440, 462, 470, 480, 768, 708, 678, 876, 756, 920, 950, 968, 1068, 1044, 765, 708, 708, 950, 1056, 0,
  1032, 708, 636, 558, 678, 698, 728, 522, 285, 372, 363, 555, 465, 342, 228, 276, 189, 165, 120, 222, 198, 465,
  399, 282, 279, 249, 207, 597, 699, 543, 294, 246, 330, 474, 525, 624, 447, 348, 315, 213, 147, 54,
];
// x, wick top, wick bottom, body top, body bottom, kind (r, g, d) in 3x units from (768, 120)
const candles = [
  [10, 22, 70, 42, 60, "r"], [26, 42, 85, 44, 70, "r"], [44, 70, 108, 70, 95, "r"], [62, 82, 120, 94, 106, "r"],
  [80, 95, 130, 106, 118, "r"], [98, 118, 155, 118, 143, "r"], [113, 128, 180, 130, 155, "r"], [131, 130, 170, 142, 155, "g"],
  [149, 128, 192, 130, 143, "r"], [167, 130, 165, 142, 155, "r"], [182, 105, 155, 130, 155, "g"], [200, 118, 143, 129, 131, "d"],
  [218, 105, 145, 118, 130, "g"], [236, 58, 120, 58, 108, "g"], [254, 30, 72, 58, 60, "d"], [268, 52, 95, 58, 72, "r"],
  [287, 70, 155, 70, 155, "r"], [305, 105, 165, 105, 155, "g"], [323, 70, 190, 118, 190, "r"], [340, 105, 180, 165, 180, "g"],
  [355, 140, 192, 178, 192, "r"], [373, 152, 240, 178, 215, "r"], [392, 152, 240, 178, 205, "g"], [410, 40, 192, 58, 180, "g"],
  [424, 10, 45, 10, 45, "g"], [442, 10, 60, 10, 30, "r"], [461, 10, 45, 10, 32, "g"], [478, 10, 85, 10, 60, "r"],
  [496, 58, 130, 58, 108, "r"], [512, 95, 168, 95, 168, "r"], [530, 105, 165, 142, 155, "g"], [548, 105, 168, 142, 144, "d"],
  [565, 142, 190, 142, 190, "r"], [583, 178, 262, 178, 250, "r"], [598, 155, 250, 155, 240, "g"], [617, 130, 205, 165, 167, "d"],
  [634, 152, 215, 178, 215, "r"], [652, 165, 240, 202, 215, "g"], [667, 190, 300, 202, 215, "r"], [686, 225, 370, 228, 310, "r"],
  [703, 298, 385, 298, 335, "r"], [721, 285, 430, 322, 420, "r"], [739, 395, 468, 418, 455, "r"], [754, 430, 515, 442, 455, "g"],
  [772, 392, 455, 430, 442, "g"], [790, 405, 503, 430, 432, "d"], [808, 370, 430, 405, 430, "g"], [826, 370, 420, 394, 408, "g"],
  [841, 272, 430, 358, 395, "g"], [859, 298, 405, 322, 358, "g"], [877, 322, 382, 322, 382, "r"], [895, 358, 468, 370, 442, "r"],
  [910, 418, 480, 430, 468, "r"], [928, 405, 552, 466, 526, "r"], [946, 480, 588, 526, 540, "g"], [964, 538, 695, 538, 670, "r"],
  [982, 670, 780, 682, 742, "r"], [997, 705, 790, 718, 742, "g"], [1015, 550, 742, 562, 706, "g"], [1033, 525, 590, 550, 562, "r"],
  [1051, 562, 660, 562, 622, "r"], [1069, 572, 648, 598, 610, "g"], [1084, 585, 660, 598, 635, "r"], [1102, 610, 768, 646, 660, "r"],
  [1120, 622, 680, 646, 660, "r"], [1138, 608, 685, 622, 658, "g"], [1153, 622, 640, 622, 635, "g"], [1171, 622, 768, 622, 730, "r"],
  [1189, 670, 790, 682, 742, "g"], [1207, 645, 742, 682, 718, "r"], [1225, 695, 768, 718, 730, "r"], [1240, 695, 755, 706, 718, "g"],
  [1258, 695, 742, 706, 718, "r"], [1276, 706, 790, 706, 730, "r"],
];
const bubbles = [
  [322, 190, 22, "#f49a9a", "#e86a6a"], [373, 214, 16, "#f49a9a", "#e86a6a"], [497, 106, 17, "#f8d4d4", "#f8d4d4"],
  [598, 154, 16, "#58b8b8", "#30f0f0"], [667, 214, 34, "#fbe6e6", "#fff"], [420, 25, 15, "#e8f4f4", "#fff"],
  [721, 418, 31, "#b04c4c", "#f07070"], [841, 358, 28, "#eef8f8", "#fff"], [928, 526, 28, "#f8e6e6", "#fff"],
  [1015, 562, 42, "#72c4c4", "#80f0f0"], [964, 670, 45, "#ae5c5c", "#f08080"], [1102, 658, 25, "#dff0f0", "#fff"],
  [1171, 730, 31, "#ac2c2c", "#f06060"],
];
const volumes = [
  [8, "r", 303], [22, "t", 312], [38, "t", 303], [54, "r", 306], [70, "r", 306], [85, "r", 303], [98, "r", 291], [113, "t", 315],
  [129, "t", 282], [145, "r", 303], [159, "t", 285], [174, "r", 309], [190, "r", 279], [206, "t", 297], [221, "t", 297], [235, "r", 303],
  [250, "r", 282], [266, "r", 270], [281, "r", 237], [298, "t", 264], [311, "r", 276], [326, "r", 267], [342, "r", 276], [358, "t", 264],
  [371, "t", 255], [387, "r", 291], [403, "t", 285], [418, "r", 285], [434, "r", 273], [447, "r", 285], [463, "r", 288], [479, "r", 294],
  [494, "r", 297], [510, "r", 261], [523, "t", 258], [539, "r", 273], [555, "r", 288], [570, "r", 285], [583, "r", 156], [599, "r", 207],
  [615, "t", 204], [631, "r", 174], [646, "t", 189], [659, "t", 198], [675, "t", 252], [691, "r", 258], [707, "t", 258], [722, "t", 273],
  [735, "t", 189], [751, "t", 258], [767, "t", 267], [783, "r", 234], [796, "r", 228], [812, "r", 189], [827, "r", 240], [843, "r", 78],
  [859, "r", 135], [872, "t", 213], [888, "t", 90], [903, "r", 192], [919, "r", 213], [935, "t", 270], [948, "r", 261], [964, "t", 219],
  [979, "r", 261], [995, "r", 279], [1008, "t", 270], [1024, "r", 171], [1040, "t", 258], [1055, "t", 261], [1071, "r", 261], [1084, "t", 288],
  [1100, "t", 300], [1116, "r", 279],
];

const trades = [
  ["2021.06.22 08:20:15", "mesu21", "17092345", "sell", "1", "4210.00", "4211.75", "", "2021.06.22 08:27:42", "4208.75", "-0.84", "6.25", "0.03 %"],
  ["2021.06.22 08:42:58", "mesu21", "17092542", "sell", "1", "4208.25", "4210.00", "", "2021.06.22 08:45:46", "4207.00", "-0.84", "6.25", "0.03 %"],
];
const headers = ["Символ", "Тикет", "Тип", "Объем", "Цена", "S / L", "T / P", "Время", "Цена", "Комиссия", "Прибыль", "Изменение"];
const tabs = [
  ["Торговля", 69], ["Активы", 60], ["История", 64, true], ["Новости", 65], ["Почта", 60], ["Календарь", 76],
  ["Компания", 74], ["Алерты", 60], ["Статьи", 55], ["Библиотека", 83], ["Эксперты", 71], ["Журнал", 60],
];

/* ---------- chart pieces ---------- */
const ChartText = styled.text`
  font-family: "Liberation Sans", Arial, sans-serif;
  font-size: ${(p) => p.$size || 12.5}px;
  font-weight: ${(p) => (p.$bold ? "bold" : "normal")};
  fill: ${(p) => p.$fill || TXT};
  white-space: pre;
`;

const PriceTag = ({ x, y, w, h, text, textX }) => (
  <g>
    <path d={`M${x} ${y + h / 2}l8 -${h / 2}H${x + w}V${y + h}H${x + 8}z`} fill="#7c7c7c" />
    <ChartText x={textX} y={y + h - 3.5} textAnchor="end" $size={14.5} $bold $fill="#1a1a1a">{text}</ChartText>
  </g>
);

const Footprint = () => (
  <g>
    {sideBars.map(([x, a, b, red]) => (
      <rect key={`${x}-${a}`} x={x} y={a} width="2.500" height={b - a} fill={red ? "#dc1440" : "#00c8d0"} />
    ))}
    {footprint.map((col) => {
      const rows = col.rows.split(" ");
      const w = col.w || 28;
      return (
        <g key={col.x}>
          <rect x={col.x} y={col.top} width={w} height={rows.length * 9.6 + 1} fill="#3c3c3c" stroke="#808080" />
          {rows.map((r, i) => {
            const y = col.top + i * 9.6 + 0.5;
            const bg = r.endsWith("u") ? "#5a46a8" : r.endsWith("b") ? "#007a9e" : null;
            return (
              <g key={i}>
                {bg && <rect x={col.x + 0.5} y={y} width={w - 1} height="9.600" fill={bg} />}
                <ChartText
                  x={col.x + w / 2}
                  y={y + 7.8}
                  textAnchor="middle"
                  $size={8}
                  $fill={r.includes("g") ? "#d6f2a0" : "#f4dcdc"}
                >
                  {parseInt(r, 10)}
                </ChartText>
              </g>
            );
          })}
        </g>
      );
    })}
    {redBoxes.map(([x, y]) => (
      <rect key={`${x}-${y}`} x={x} y={y} width="29" height="9.500" fill="rgba(150,30,30,.62)" stroke="#d85a60" />
    ))}
    {tealBoxes.map(([x, y]) => (
      <rect key={`${x}-${y}`} x={x} y={y} width="29" height="9.500" fill="rgba(0,150,150,.5)" stroke="#00c0d0" />
    ))}
    {flags.map(([x, y, d, c]) => (
      <path key={`${x}-${y}`} d={`M${x} ${y - 5.500}l${6 * d} 5.500l${-6 * d} 5.500z`} fill={c} />
    ))}
  </g>
);

const MesuChart = () => (
  <svg width="750" height="457" viewBox="10 103 750 457">
    <path d="M532 103h12l-6 5z" fill={AXIS} />
    <path d="M10 291.500H686" stroke="#6c7480" />
    <Footprint />
    <path d="M180 272H681" stroke="#f00000" strokeWidth="3" />
    <path d="M681 103V519" stroke={AXIS} />
    {range(22).map((i) => {
      const y = 110 + i * 19.05;
      return (
        <g key={i}>
          <path d={`M681 ${y}h12`} stroke={AXIS} />
          {i < 21 && <path d={`M681 ${y + 9.500}h5`} stroke="#5a6678" />}
          <ChartText x="755" y={y + 5} textAnchor="end">{(4217 - i).toFixed(2)}</ChartText>
        </g>
      );
    })}
    <path d="M681 272h14" stroke="#fff" />
    <rect x="695.500" y="264.500" width="60" height="16" fill="#f00000" stroke="#fff" />
    <ChartText x="754" y="277" textAnchor="end" $size={13.5} $fill="#fff">4208.50</ChartText>
    <PriceTag x={686} y={284} w={73} h={15} text="4207.75" textX={758} />
    <ChartText x="545" y="309" $bold $fill="#a9bcd8" $size={12.5}>13:46:07</ChartText>
    <ChartText x="546" y="322" $bold $fill="#a9bcd8" $size={12.5}>979</ChartText>
    <path d="M482 208h9v28h4l-8.500 33-8.500-33h4z" fill="#000" stroke="#fff" strokeWidth="3" strokeLinejoin="round" />
    <path d="M496 381h10v-32h4l-9-36-9 36h4z" fill="#000" stroke="#fff" strokeWidth="3" strokeLinejoin="round" />
    <ToolsMark x={13} y={497} />
    <ChartText x="35" y="512" $size={12.5} letterSpacing=".3">O: 4213.25  H: 4213.25  L: 4211.00  C: 4211.00</ChartText>
    <path d="M10 519.500H760M10 540.500H760" stroke={AXIS} />
    {[["07:13", 89], ["07:32", 179], ["07:51", 268], ["08:01", 358], ["08:26", 449]].map(([t, x]) => (
      <ChartText key={t} x={x} y="554" textAnchor="middle" $size={11}>{t}</ChartText>
    ))}
    <rect x="529.500" y="542.500" width="9" height="15" fill="none" stroke={AXIS} />
    <ChartText x="750" y="556" textAnchor="end" $size={12.5} letterSpacing=".2">2021.06.22 08:45:59</ChartText>
  </svg>
);

const EpuChart = () => {
  const px = (v) => 768 + v / 3;
  const py = (v) => 120 + v / 3;
  return (
    <svg width="587" height="460" viewBox="770 103 587 460">
      <path d="M1190 103h12l-6 5z" fill={AXIS} />
      {profile.map((end, i) =>
        end ? <rect key={i} x="770" y={130 + i * 4} width={end / 3 - 2} height="2" fill="#5c5c5c" /> : null
      )}
      <path d="M844 127.500H1198" stroke="#d8b888" />
      <rect x="770" y="214" width="428" height="2.500" fill="#78b010" stroke="#86c020" strokeWidth=".5" />
      <rect x="860" y="278" width="338" height="2.500" fill="#d9a878" stroke="#e8b078" strokeWidth=".5" />
      <path d="M770 363.500H1283" stroke="#767c84" />
      <rect x="770" y="362" width="147" height="2.500" fill="#767c84" />
      {bubbles.map(([x, y, r, fill, stroke]) => (
        <circle key={x} cx={px(x)} cy={py(y)} r={r / 3} fill={fill} stroke={stroke} />
      ))}
      {candles.map(([x, a, b, c, d, kind]) => (
        <g key={x}>
          <path d={`M${px(x)} ${py(a)}V${py(b)}`} stroke="#9a9a9a" />
          <rect
            x={px(x) - 1.5}
            y={py(c)}
            width="3"
            height={Math.max(py(d) - py(c), 1)}
            fill={kind === "r" ? "#e81818" : kind === "g" ? "#38c038" : "#aaa"}
            stroke="#999"
            strokeWidth=".6"
          />
        </g>
      ))}
      <path d="M1277.500 103V431M1277.500 431V521" stroke={AXIS} />
      {range(103).map((i) => (
        <path key={i} d={`M1277 ${102.300 + i * 3.2}h6`} stroke="#5a6678" />
      ))}
      {range(21).map((i) => {
        const y = 102 + i * 16;
        return (
          <g key={i}>
            <path d={`M1277 ${y}h12`} stroke={AXIS} />
            <ChartText x="1350" y={y + 5} textAnchor="end">{(4224 - i).toFixed(2)}</ChartText>
          </g>
        );
      })}
      <PriceTag x={1282} y={355} w={73} h={17} text="4207.75" textX={1353} />
      <ChartText x="1254" y="381" textAnchor="end" $bold $fill="#a9bcd8" $size={12.5}>13:46:07</ChartText>
      <ChartText x="1254" y="394" textAnchor="end" $bold $fill="#a9bcd8" $size={12.5}>01:54</ChartText>
      <ToolsMark x={773} y={411} />
      <rect x="770" y="431" width="587" height="132" fill="#000" />
      <path d="M770 431.500H1357M770 522.500H1357M770 543.500H1357" stroke={AXIS} />
      <path d="M1277.500 431V521" stroke={AXIS} />
      <ChartText x="775" y="449" $size={12}>Volume</ChartText>
      {volumes.map(([x, kind, top]) => (
        <rect
          key={x}
          x={768 + x / 2.617 - 1.5}
          y={410 + top / 2.98}
          width="3"
          height={(327 - top) / 2.98}
          fill={kind === "r" ? "#a50000" : "#00b0b0"}
        />
      ))}
      <path d="M1277 504h13" stroke="#fff" />
      <rect x="1292.500" y="496.500" width="51" height="16" fill="#808080" stroke="#fff" />
      <ChartText x="1342" y="509" textAnchor="end" $size={12} $fill="#f0f0f0">507</ChartText>
      {[["05:39", 837], ["06:27", 927], ["07:12", 1017], ["08:00", 1107]].map(([t, x]) => (
        <ChartText key={t} x={x} y="558" textAnchor="middle" $size={11.5}>{t}</ChartText>
      ))}
      <rect x="1151.500" y="546.500" width="45" height="15" fill="none" stroke={AXIS} />
      <ChartText x="1347" y="559" textAnchor="end" $size={12.5} letterSpacing=".2">2021.06.22 08:45:00</ChartText>
    </svg>
  );
};

const Glyph = ({ kind }) => {
  const draw = {
    plus: "M1 6h11M6.500 1v10",
    minus: "M1 6h11",
    bar: "M6.500 1v10",
    slash: "M2 11L10 1",
    list: "M1 2h11M1 4.500h7M1 7h11M1 9.500h5M1 11.500h8",
  }[kind];
  return (
    <svg width="13" height="13" viewBox="0 0 13 13">
      <path d={draw} fill="none" stroke="currentColor" strokeWidth={kind === "minus" || kind === "bar" ? 2 : 1} />
    </svg>
  );
};
const DrawBtns = ({ on = [] }) => (
  <>
    <ChartBtn $on={on.includes(0)}><Glyph kind="plus" /></ChartBtn>
    <ChartBtn $on={on.includes(1)}>H</ChartBtn>
    <ChartBtn><Glyph kind="minus" /></ChartBtn>
    <ChartBtn><Glyph kind="bar" /></ChartBtn>
    <ChartBtn $on><Glyph kind="slash" /></ChartBtn>
    <ChartBtn><Glyph kind="list" /></ChartBtn>
    <ChartBtn><b>F</b></ChartBtn>
    <ChartBtn $on={on.includes(7)} $size={14}>●</ChartBtn>
    <ChartBtn>P</ChartBtn>
    <ChartBtn $size={9}>Rh</ChartBtn>
    <ChartBtn>C</ChartBtn>
  </>
);
const ModeBtns = () => (
  <>
    <ChartBtn>A</ChartBtn>
    <ChartBtn $on>➔</ChartBtn>
    <ChartBtn $on>Ɪ</ChartBtn>
    <ChartBtn>M</ChartBtn>
  </>
);
const WindowControls = ({ active }) => (
  <HeadButtons $active={active}>
    <HeadButton>
      <svg width="12" height="12" viewBox="0 0 12 12"><path d="M1 10h9" stroke="currentColor" strokeWidth="2" /></svg>
    </HeadButton>
    <HeadButton>
      <svg width="12" height="14" viewBox="0 0 12 14"><path d="M1.500 2.500h9v10h-9zM1.500 2.500h9" fill="none" stroke="currentColor" strokeWidth="1.300" /></svg>
    </HeadButton>
    <HeadButton>
      <svg width="12" height="12" viewBox="0 0 12 12"><path d="M2 1.500l8 9M10 1.500l-8 9" stroke="currentColor" strokeWidth="1.800" /></svg>
    </HeadButton>
  </HeadButtons>
);

export default function App() {
  return (
    <Screen>
      <GlobalStyle />
      <TitleBar>
        <Mt5Logo />
        <Redacted />
        <TitleText>- AMPGlobalEU-Live - Netting - MESU21,M1</TitleText>
        <CaptionButtons>
          <CaptionButton $grow={1}>▼</CaptionButton>
          <CaptionButton $grow={1}>❐</CaptionButton>
          <CaptionButton $grow={1.6}>X</CaptionButton>
        </CaptionButtons>
      </TitleBar>
      <MenuBar>
        {["Файл", "Вид", "Вставка", "Графики", "Сервис", "Окно", "Справка"].map((m) => (
          <span key={m}>{m}</span>
        ))}
      </MenuBar>
      <Toolbar>
        <Grip $w={8} $ml={2} />
        <ToolBtn $w={24}><NewChartIcon /></ToolBtn>
        <DropArrow $w={14} />
        <Gap $w={1} />
        <ToolBtn $w={24}><ProfilesIcon /></ToolBtn>
        <DropArrow $w={14} />
        <ToolBtn $w={26}><MoneyIcon /></ToolBtn>
        <Gap $w={6} />
        <Sep />
        <Gap $w={3} />
        <ToolBtn $w={30}><BookIcon /></ToolBtn>
        <ToolBtn $w={34}><BagIcon /></ToolBtn>
        <ToolBtn $w={32}><SignalIcon /></ToolBtn>
        <ToolBtn $w={30}><VpsIcon /></ToolBtn>
        <ToolBtn $w={32}><PersonIcon /></ToolBtn>
        <Gap $w={4} />
        <Sep />
        <Gap $w={4} />
        <ToolBtn $w={109} $pressed><AlgoIcon />Алготрейдинг</ToolBtn>
        <Gap $w={3} />
        <ToolBtn $w={100}><OrderIcon />Новый ордер</ToolBtn>
        <Gap $w={8} />
        <Sep />
        <Gap $w={4} />
        <ToolBtn $w={31}><BarsIcon /></ToolBtn>
        <Gap $w={1} />
        <ToolBtn $w={30} $pressed><CandlesIcon /></ToolBtn>
        <Gap $w={1} />
        <ToolBtn $w={32}><LineIcon /></ToolBtn>
        <Gap $w={2} />
        <Sep />
        <Gap $w={3} />
        <ToolBtn $w={30}><ZoomIcon plus /></ToolBtn>
        <ToolBtn $w={34}><ZoomIcon /></ToolBtn>
        <ToolBtn $w={32}><TileIcon /></ToolBtn>
        <Gap $w={2} />
        <Sep />
        <Gap $w={4} />
        <ToolBtn $w={30} $pressed><AutoScrollIcon /></ToolBtn>
        <ToolBtn $w={34}><ShiftIcon /></ToolBtn>
        <Gap $w={1} />
        <Sep />
        <ToolBtn $w={35}><SaveIcon /></ToolBtn>
        <Gap $w={2} />
        <Grip $w={4} />
        <Gap $w={4} />
        <ToolBtn $w={30} $pressed><CursorIcon /></ToolBtn>
        <ToolBtn $w={32}><CrossIcon /></ToolBtn>
        <Gap $w={3} />
        <Sep />
        <ToolBtn $w={34}><ToolLine d="M10 3v14" /></ToolBtn>
        <ToolBtn $w={32}><ToolLine d="M3 10h14" /></ToolBtn>
        <ToolBtn $w={32}><ToolLine d="M4 17L16 3" /></ToolBtn>
        <ToolBtn $w={32}><EIcon /></ToolBtn>
        <ToolBtn $w={34}><FIcon /></ToolBtn>
        <ToolBtn $w={30}><TIcon /></ToolBtn>
        <ToolBtn $w={30}><ArrowsIcon /></ToolBtn>
        <DropArrow $w={10} />
        <Sep />
        <Fill />
        <ToolBtn $w={32}><SearchIcon /></ToolBtn>
        <ToolBtn $w={36}><NotifyIcon /></ToolBtn>
        <ToolBtn $w={34}><LvlIcon /></ToolBtn>
        <LevelBar />
        <Gap $w={5} />
      </Toolbar>

      <Workspace>
        <ChartWindow $active $w={766} $ml={2} $h={494} $pl={7} $pr={8}>
          <WindowHead $active $pr={8} $pl={7} $textPad={8}>
            <WindowIcon />
            MESU21,M1
            <WindowControls active />
          </WindowHead>
          <ChartFrame $w={751} $h={457}>
            <MesuChart />
            <ChartTools>
              <ChartLabel $w={64}>{"Тик  1000"}</ChartLabel>
              <DrawBtns on={[1]} />
              <ChartDivider $w={4} />
              <VolumeSelect>volume</VolumeSelect>
              <Spinner>2<SpinArrows /></Spinner>
              <ModeBtns />
            </ChartTools>
          </ChartFrame>
        </ChartWindow>
        <ChartWindow $w={597} $ml={1} $h={491} $pl={1} $pr={9}>
          <WindowHead $pr={9} $pl={1} $textPad={2}>
            <WindowIcon dim />
            EPU21,M1
            <WindowControls />
          </WindowHead>
          <ChartFrame $w={587} $h={460}>
            <EpuChart />
            <ChartTools>
              <ChartLabel $w={65}>{"Минута  3"}</ChartLabel>
              <DrawBtns on={[0, 7]} />
              <ChartDivider $w={28} />
              <ModeBtns />
            </ChartTools>
          </ChartFrame>
        </ChartWindow>
      </Workspace>

      <SymbolTabs>
        <SymbolTab $active $w={85}>MESU21,M1</SymbolTab>
        <SymbolTab $w={72}>EPU21,M1</SymbolTab>
        <TabArrows><span>◂</span><span>▸</span></TabArrows>
      </SymbolTabs>

      <Terminal>
        <SideStrip>
          <CloseMark>x</CloseMark>
          <SideLabel>Инструменты</SideLabel>
        </SideStrip>
        <TerminalBody>
          <TableGrid>
            <HeadCell $left>Время<SortMark /></HeadCell>
            {headers.map((h, i) => (
              <HeadCell key={i}>{h}</HeadCell>
            ))}
            {trades.map((row, r) =>
              row.map((v, c) =>
                c === 0 ? (
                  <Cell key={`${r}-${c}`} $left $alt={r === 1}><TableDoc />{v}</Cell>
                ) : (
                  <Cell key={`${r}-${c}`} $alt={r === 1} $blue={c > 10}>{v}</Cell>
                )
              )
            )}
            <SumCell $left $span={10}>
              <svg width="13" height="13" viewBox="0 0 13 13">
                <circle cx="6.500" cy="6.500" r="5.500" fill="none" stroke="#333" strokeWidth="1.200" />
                <path d="M3.500 6.500h6" stroke="#333" strokeWidth="1.500" />
              </svg>
              {"Прибыль: -13.79  Кредит: 0.00  Депозит: 0.00  Снятие: 0.00  Баланс: -13.79"}
            </SumCell>
            <SumCell>-5.04</SumCell>
            <SumCell>-8.75</SumCell>
            <SumCell />
          </TableGrid>
          <BottomTabs>
            {tabs.map(([t, w, active], i) => (
              <BottomTab key={t} $w={w} $active={active} $noSep={i === 1 || i === tabs.length - 1}>
                {t}
                {t === "Почта" && <MailCount>7</MailCount>}
              </BottomTab>
            ))}
            <Fill />
            <ServiceLink $w={72}><BagIcon s={16} />Маркет</ServiceLink>
            <ServiceLink $w={77}><SignalIcon s={16} />Сигналы</ServiceLink>
            <ServiceLink $w={50}><VpsIcon s={16} />VPS</ServiceLink>
            <ServiceLink $w={110}>
              <svg width="16" height="16" viewBox="0 0 16 16">
                <rect x=".5" y=".5" width="15" height="15" fill="#163a18" stroke="#1c6ec4" />
                <rect x=".5" y=".5" width="15" height="3" fill="#1c78d4" />
                <path d="M2 13l4-4 3 2 5-5" stroke="#7ae07a" fill="none" />
              </svg>
              Тестер стратегий
            </ServiceLink>
            <Gap $w={9} />
          </BottomTabs>
        </TerminalBody>
        <ScrollBar>
          <ScrollBtn $h={17}>▲</ScrollBtn>
          <ScrollBtn $h={18} $mt={32}>≡</ScrollBtn>
          <ScrollBtn $h={17} $mt={4}>▼</ScrollBtn>
        </ScrollBar>
      </Terminal>

      <StatusBar>
        <StatusCell $w={674} $pl={2}>Для вызова справки нажмите F1</StatusCell>
        <StatusCell $w={132} $pl={11}>Default</StatusCell>
        <StatusCell $w={98} />
        <StatusCell $w={71} />
        <StatusCell $w={70} />
        <StatusCell $w={67} />
        <StatusCell $w={69} />
        <StatusCell $w={66} />
        <StatusCell $w={110} $pl={5} $last>
          <svg width="16" height="14" viewBox="0 0 16 14">
            <path d="M1 13v-2M4 13V9M7 13V6M10 13V3" stroke="#38a010" strokeWidth="2" />
            <path d="M13.500 13V1" stroke="#bbb" strokeWidth="2" />
          </svg>
          185.97 ms
        </StatusCell>
      </StatusBar>

      <Taskbar>
        <TaskItem $w={56}><OrbIcon /></TaskItem>
        <TaskItem $w={62}><ExcelIcon /></TaskItem>
        <TaskItem $w={63}><WordIcon /></TaskItem>
        <TaskItem $w={63}><CalcIcon /></TaskItem>
        <TaskItem $w={62}><FolderIcon /></TaskItem>
        <TaskItem $w={63}><OperaIcon /></TaskItem>
        <Gap $w={1} />
        <TaskItem $w={58} $frame $active><Mt5Logo s={34} /></TaskItem>
        <Gap $w={4} />
        <TaskItem $w={58} $frame><WifiTile s={32} /></TaskItem>
        <Fill />
        <TrayLang>EN</TrayLang>
        {Object.keys(Tray).map((k) => (
          <TrayIcon key={k}>{Tray[k]}</TrayIcon>
        ))}
        <Clock>13:46<br />22.06.2021</Clock>
        <ShowDesktop />
      </Taskbar>
    </Screen>
  );
}
